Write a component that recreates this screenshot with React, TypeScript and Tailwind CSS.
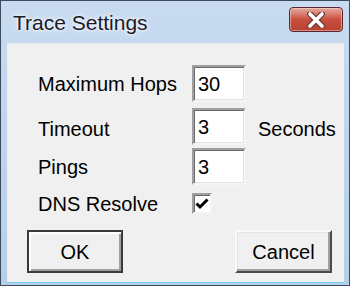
import { useState } from "react";

const font = "font-['Liberation_Sans',Arial,sans-serif]";

const Field = ({ value }: { value: string }) => (
  <div className="flex h-[37px] w-[54px] items-center border-2 border-t-[#a0a0a0] border-l-[#a0a0a0] border-r-[#f4f4f4] border-b-[#f4f4f4] bg-white pl-[4px] text-[20px] leading-none text-black shadow-[inset_1px_1px_0_#6a6a6a,inset_-1px_-1px_0_#e3e3e3]">
    {value}
  </div>
);

const Button = ({ label, isDefault }: { label: string; isDefault?: boolean }) => (
  <button
    className={
      isDefault
        ? "flex h-[43px] w-[96px] items-center justify-center border-2 border-[#3a3a3a] bg-[#f0f0f0] text-[20px] text-black shadow-[inset_2px_2px_0_#ffffff,inset_-2px_-2px_0_#a0a0a0]"
        : "flex h-[43px] w-[97px] items-center justify-center border-2 border-t-[#fafafa] border-l-[#fafafa] border-r-[#4a4a4a] border-b-[#4a4a4a] bg-[#f0f0f0] text-[20px] text-black shadow-[inset_-2px_-2px_0_#a0a0a0,inset_1px_1px_0_#e3e3e3]"
    }
  >
    {label}
  </button>
);

export default function App() {
  const [dns, setDns] = useState(true);

  return (
    <div className={`${font} flex h-[286px] w-[350px] flex-col border border-[#3d4b5e] bg-gradient-to-b from-[#c8dbf0] to-[#b6cfe9] pb-[3px] pl-[6px] pr-[5px]`}>
      <div className="flex h-[42px] shrink-0 items-center justify-between pl-[6px] pr-[1px]">
        <span className="pt-[1px] text-[21px] leading-none text-[#1a1a2a] [text-shadow:0_0_6px_#ffffff,0_0_3px_#ffffff]">
          Trace Settings
        </span>
        <div className="mb-[5px] flex h-[25px] w-[54px] items-center justify-center rounded-[4px] border border-[#5a2630] bg-gradient-to-b from-[#e3a99f] via-[#c9503f] to-[#b8402f] shadow-[inset_0_0_0_1px_rgba(255,220,210,0.5)]">
          <svg width="22" height="16" viewBox="0 0 22 16">
            <path d="M5 2 L17 14 M17 2 L5 14" stroke="#6a3a36" strokeWidth="6" strokeLinecap="round" />
            <path d="M5 2 L17 14 M17 2 L5 14" stroke="#ffffff" strokeWidth="3.6" strokeLinecap="round" />
          </svg>
        </div>
      </div>

      <div className="flex flex-1 flex-col border-l border-t border-[#e8eef5] bg-[#f0f0f0] text-[20px] text-black shadow-[0_1px_0_#6fd0e8]">
        <div className="flex flex-col pl-[30px] pt-[21px]">
          <div className="flex h-[37px] items-center">
            <span className="w-[154px]">Maximum Hops</span>
            <Field value="30" />
          </div>
          <div className="mt-[6px] flex h-[37px] items-center">
            <span className="w-[154px] pt-[4px]">Timeout</span>
            <Field value="3" />
            <span className="ml-[12px] pt-[4px]">Seconds</span>
          </div>
          <div className="mt-[3px] flex h-[37px] items-center">
            <span className="w-[154px]">Pings</span>
            <Field value="3" />
          </div>
          <div className="mt-[8px] flex h-[21px] items-center">
            <span className="w-[154px]">DNS Resolve</span>
            <div
              onClick={() => setDns(!dns)}
              className="flex h-[21px] w-[20px] items-center justify-center border-2 border-t-[#a0a0a0] border-l-[#a0a0a0] border-r-[#f4f4f4] border-b-[#f4f4f4] bg-white shadow-[inset_1px_1px_0_#6a6a6a]"
            >
              {dns && (
                <svg width="14" height="12" viewBox="0 0 14 12">
                  <path d="M1.5 5.5 L5 9 L12.5 1.5" stroke="#000" strokeWidth="3" fill="none" />
                </svg>
              )}
            </div>
          </div>
        </div>

        <div className="mt-[16px] flex justify-between pl-[19px] pr-[12px]">
          <Button label="OK" isDefault />
          <Button label="Cancel" />
        </div>
      </div>
    </div>
  );
}
